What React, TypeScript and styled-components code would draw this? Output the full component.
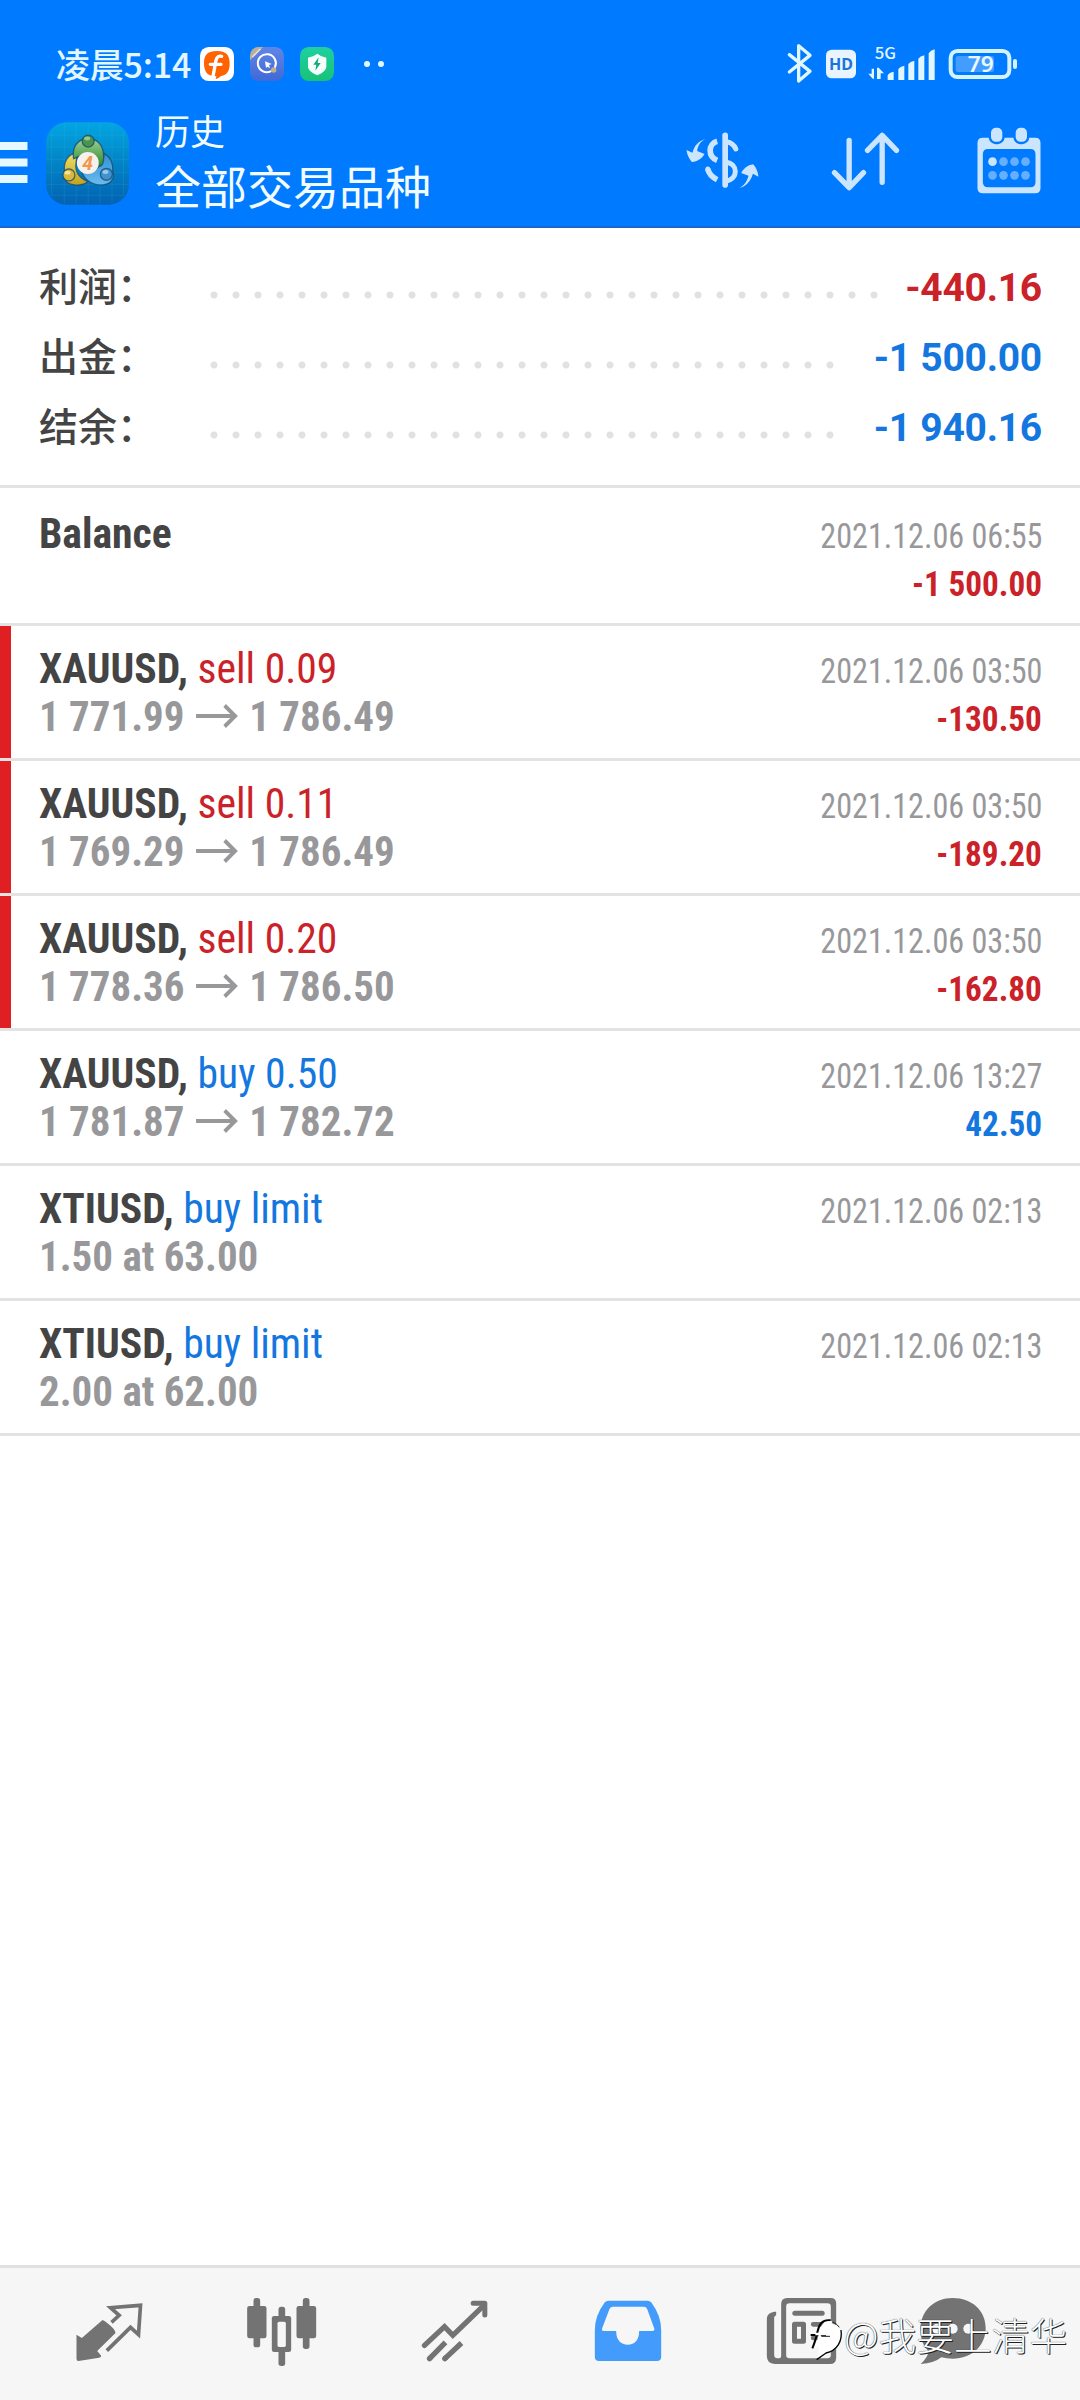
import React from "react";
import styled, { createGlobalStyle } from "styled-components";

const cjk = `"Noto Sans CJK SC", sans-serif`;
const condensed = `"Roboto Condensed", Roboto, "Noto Sans CJK SC", sans-serif`;

const GlobalStyle = createGlobalStyle`
  * { box-sizing: border-box; }
  body { margin: 0; background: #fff; }
  svg { display: block; flex: none; overflow: visible; }
`;

type Tone = "red" | "blue";
const tones: Record<Tone, string> = { red: "#cb2229", blue: "#1477e0" };

const Screen = styled.div`
  position: relative;
  width: 1080px;
  height: 2400px;
  display: flex;
  flex-direction: column;
  background: #fff;
  overflow: hidden;
  font-family: Roboto, ${cjk};
`;

const Header = styled.header`
  height: 228px;
  background: #007aff;
  border-bottom: 2px solid #1a66cf;
`;

const StatusBar = styled.div`
  height: 98px;
  padding: 30px 62px 0 56px;
  display: flex;
  align-items: center;
  justify-content: space-between;
`;

const Notifications = styled.div`
  display: flex;
  align-items: center;
  gap: 16px;
`;

const Clock = styled.span`
  width: 128px;
  font: 500 34px/50px ${cjk};
  letter-spacing: -0.2px;
  color: #e2f6ff;
  white-space: nowrap;
`;

const MoreDots = styled.div`
  margin-left: 14px;
`;

const AppBar = styled.div`
  height: 130px;
  display: flex;
  align-items: center;
`;

const LogoSlot = styled.div`
  margin-left: 18px;
`;

const Titles = styled.div`
  margin: -8px 0 0 26px;
  flex: 1;
  display: flex;
  flex-direction: column;
  color: #f2fcff;
`;

const Caption = styled.span`
  font: 400 35px/50px ${cjk};
`;

const Title = styled.span`
  font: 400 46px/58px ${cjk};
`;

const ToolButton = styled.div`
  width: 143px;
  display: flex;
  justify-content: center;
`;

const Summary = styled.section`
  height: 260px;
  padding: 25px 38px 0 39px;
  border-bottom: 3px solid #e3e3e3;
`;

const SummaryRow = styled.div`
  height: 70px;
  display: flex;
  align-items: center;
`;

const SummaryLabel = styled.span`
  width: 163.5px;
  margin-top: -8px;
  font: 500 39px/62px ${cjk};
  color: #444;
`;

const Leader = styled.span<{ $dots: number }>`
  width: ${(p) => p.$dots * 22}px;
  height: 22px;
  margin-top: 13px;
  background: radial-gradient(circle at center, #e1e1e1 3px, transparent 4px) 0 0 / 22px 22px repeat-x;
`;

const SummaryValue = styled.span<{ $tone: Tone }>`
  margin-left: auto;
  font: 700 39px/70px Roboto, sans-serif;
  letter-spacing: -0.25px;
  color: ${(p) => tones[p.$tone]};
`;

const DealList = styled.main`
  display: flex;
  flex-direction: column;
`;

const Row = styled.article<{ $first?: boolean; $marked?: boolean }>`
  height: ${(p) => (p.$first ? 138 : 135)}px;
  padding: ${(p) => (p.$first ? 20.5 : 17.5)}px 38px 0 39px;
  display: flex;
  justify-content: space-between;
  font-family: ${condensed};
  font-stretch: 75%;
  background:
    linear-gradient(#e01f22, #e01f22) 0 0 / ${(p) => (p.$marked ? 11 : 0)}px 132px no-repeat,
    linear-gradient(#e3e3e3, #e3e3e3) bottom / 100% 3px no-repeat;
`;

const Column = styled.div<{ $end?: boolean }>`
  display: flex;
  flex-direction: column;
  align-items: ${(p) => (p.$end ? "flex-end" : "flex-start")};
`;

const Line = styled.div`
  height: 48px;
  display: flex;
  align-items: center;
  font-size: 43px;
  line-height: 48px;
  font-weight: 700;
  white-space: pre;
  transform: scaleX(0.968);
  transform-origin: left;
`;

const Symbol = styled.span`
  color: #444;
`;

const Action = styled.span<{ $tone: Tone }>`
  font-weight: 400;
  color: ${(p) => tones[p.$tone]};
`;

const Price = styled(Line)`
  color: #98989b;
  gap: 12px;
  transform: scaleX(0.952);
`;

const Stamp = styled.div`
  height: 48px;
  margin-top: 3px;
  font-size: 35.5px;
  line-height: 48px;
  color: #98989b;
  transform: scaleX(0.905);
  transform-origin: right;
`;

const Amount = styled.div<{ $tone: Tone }>`
  height: 48px;
  font-size: 35.5px;
  line-height: 48px;
  font-weight: 700;
  color: ${(p) => tones[p.$tone]};
  transform: scaleX(0.935);
  transform-origin: right;
`;

const TabBar = styled.nav`
  margin-top: auto;
  height: 135px;
  padding-left: 22px;
  display: flex;
  background: #f6f6f6;
  border-top: 3px solid #e1e1e1;
`;

const Tab = styled.div<{ $w?: number }>`
  width: ${(p) => p.$w ?? 173}px;
  padding-top: 24px;
  display: flex;
  justify-content: center;
`;

const Watermark = styled.div`
  position: absolute;
  left: 808px;
  top: 2309px;
  display: flex;
  align-items: center;
  font: 300 37.8px/50px ${cjk};
  color: #fff;
  white-space: nowrap;
  text-shadow: 1px 1px 0 #222, 0 0 1px #000;
`;

const FIcon = () => (
  <svg width="34" height="34" viewBox="600 48 102 102">
    <rect x="600" y="48" width="102" height="102" rx="26" fill="#fff" />
    <path d="M651 60c27 0 38 12 38 37s-9 35-25 38c-5 1-8 8-17 9l2-8c-26 0-37-12-37-39s12-37 39-37z" fill="#ff6200" />
    <path d="M665 76c-14-3-17 8-19 22l-8 44M631 100h32" fill="none" stroke="#fff" strokeWidth="10" strokeLinecap="round" />
  </svg>
);

const QIcon = () => (
  <svg width="34" height="34" viewBox="750 48 102 102">
    <defs>
      <clipPath id="qclip"><rect x="750" y="48" width="102" height="102" rx="26" /></clipPath>
      <linearGradient id="qbg" x1="0" y1="0" x2="0" y2="1"><stop offset="0" stopColor="#5f86e6" /><stop offset="1" stopColor="#4169d8" /></linearGradient>
    </defs>
    <g clipPath="url(#qclip)">
      <rect x="750" y="48" width="102" height="102" fill="url(#qbg)" />
      <path d="M750 48h40l-40 40z" fill="#b9ad9c" />
      <path d="M757 78l24-24" stroke="#e8dfd0" strokeWidth="5" />
    </g>
    <path d="M812 121a27 27 0 1 1 13-13" fill="none" stroke="#fff" strokeWidth="6" strokeLinecap="round" />
    <path d="M795 91l20 8-8 3 3 10-8-5-4 4z" fill="#fff" />
    <circle cx="821" cy="117" r="8" fill="#c3b184" />
  </svg>
);

const ShieldIcon = () => (
  <svg width="34" height="34" viewBox="900 48 102 102">
    <defs><linearGradient id="sbg" x1="0" y1="0" x2="0" y2="1"><stop offset="0" stopColor="#1fd0a0" /><stop offset="1" stopColor="#17c277" /></linearGradient></defs>
    <rect x="900" y="48" width="102" height="102" rx="26" fill="url(#sbg)" />
    <path d="M952 68q12 10 27 12v26c0 14-14 21-27 27-13-6-28-13-28-27V80q16-2 28-12z" fill="#f4fffc" />
    <path d="M956 79l-16 22h9l-3 18 16-23h-9z" fill="#16a77a" />
  </svg>
);

const Dots = () => (
  <svg width="20" height="8" viewBox="0 0 20 8"><circle cx="3" cy="4" r="3" fill="#e2f6ff" /><circle cx="17" cy="4" r="3" fill="#e2f6ff" /></svg>
);

const SystemIcons = () => (
  <svg width="231" height="42" viewBox="351 36 693 126">
    <path d="M358 71l62 50-34 29V44l34 29-62 50" fill="none" stroke="#e2f6ff" strokeWidth="10" strokeLinejoin="round" strokeLinecap="round" />
    <rect x="468" y="56" width="90" height="86" rx="17" fill="#e9f4ff" />
    <text x="513" y="117" textAnchor="middle" fontFamily="Noto Sans, sans-serif" fontWeight="700" fontSize="49" textLength="72" lengthAdjust="spacingAndGlyphs" fill="#1873dd">HD</text>
    <text x="646" y="84" textAnchor="middle" fontFamily="Noto Sans CJK SC, sans-serif" fontWeight="500" fontSize="47" textLength="64" lengthAdjust="spacingAndGlyphs" fill="#e2f6ff">5G</text>
    <path d="M612 113v30h-4l-13-15h10v-15zM621 144v-34h5l16 17h-10v17z" fill="#e2f6ff" />
    <path d="M653 147v-14q5-9 18-11v25zM685 147v-33q5-8 18-10v43zM715 147V99q5-8 18-10v58zM745 147V83q5-8 18-10v74zM776 147V67q5-9 18-12v92z" fill="#e2f6ff" />
    <rect x="842" y="60" width="176" height="78" rx="20" fill="none" stroke="#d4f3ff" strokeWidth="12" />
    <rect x="857" y="75" width="115" height="48" rx="7" fill="#439dff" />
    <text x="932" y="124" textAnchor="middle" fontFamily="Noto Sans, sans-serif" fontWeight="600" fontSize="67" textLength="78" lengthAdjust="spacingAndGlyphs" fill="#e9f8ff">79</text>
    <rect x="1029" y="84" width="12" height="30" rx="6" fill="#d4f3ff" />
  </svg>
);

const MenuIcon = () => (
  <svg width="28" height="42" viewBox="0 0 28 42" fill="#e6f9ff"><path d="M0 0h27.5v8H0zM0 16.500h27.500v8H0zM0 33h27.500v8H0z" /></svg>
);

const AppLogo = () => (
  <svg width="83" height="83" viewBox="138 272 250 249">
    <defs>
      <linearGradient id="lbg" x1="0" y1="0" x2="0" y2="1"><stop offset="0" stopColor="#02a6e2" /><stop offset=".5" stopColor="#0283c5" /><stop offset="1" stopColor="#0262b2" /></linearGradient>
      <linearGradient id="lg" x1="0" y1="0" x2="0" y2="1"><stop offset="0" stopColor="#a5d39a" /><stop offset="1" stopColor="#2c8a2c" /></linearGradient>
      <linearGradient id="ly" x1="0" y1="0" x2="0" y2="1"><stop offset="0" stopColor="#eee06a" /><stop offset="1" stopColor="#c2a21c" /></linearGradient>
      <linearGradient id="lb" x1="0" y1="0" x2="0" y2="1"><stop offset="0" stopColor="#2f8fd2" /><stop offset="1" stopColor="#6abcf0" /></linearGradient>
    </defs>
    <rect x="138" y="272" width="250" height="249" rx="62" fill="url(#lbg)" />
    <path d="M155 300v190M193 273v247M229 273v247M265 273v247M301 273v247M337 273v247M371 300v190M150 311h226M138 347h250M138 385h250M138 423h250M138 459h250M150 492h226" stroke="#6fd0f0" strokeOpacity=".13" strokeWidth="3" />
    <g stroke="#17496b" strokeOpacity=".75" strokeWidth="4">
      <path d="M313 366c18 10 28 28 26 54 8 22-8 40-30 41-32 2-56-16-63-40 30 2 62-4 67-55z" fill="url(#lb)" />
      <path d="M232 365c-28 2-42 26-38 54-10 22 6 40 30 42 18 2 32-2 40-10-24-10-38-28-36-52z" fill="url(#ly)" />
      <path d="M221 382c-4-30 8-50 28-58 8-8 24-8 32 0 22 8 34 32 30 64-2 14-8 18-13 16-4-20-16-35-33-35s-28 6-44 13z" fill="url(#lg)" />
      <circle cx="265" cy="329" r="18" fill="#4a944c" />
      <circle cx="207" cy="431" r="18" fill="#d9b93a" />
      <circle cx="320" cy="429" r="18" fill="#3f94d0" />
    </g>
    <ellipse cx="262" cy="321" rx="9" ry="6" fill="#c8e6c4" opacity=".6" />
    <ellipse cx="203" cy="424" rx="9" ry="6" fill="#fff6c0" opacity=".7" />
    <ellipse cx="317" cy="422" rx="9" ry="6" fill="#d0ecff" opacity=".6" />
    <circle cx="264" cy="395" r="33" fill="#f6f1ec" />
    <text x="263" y="415" textAnchor="middle" fontFamily="Roboto, sans-serif" fontWeight="700" fontSize="58" fontStyle="italic" fill="#f3964e">4</text>
  </svg>
);

const CurrencyIcon = () => (
  <svg width="80" height="80" viewBox="37.500 279 240 240" fill="#cce5ff">
    <path d="M106 327c-16 6-24 20-26 36l22 9c-8 14-21 23-38 24-8-9-14-20-16-36l18 8c5-20 18-36 40-41z" />
    <path d="M206 474c16-8 24-21 28-37l-22-8c8-14 18-23 36-26 9 9 14 22 16 37l-17-9c-6 22-20 38-41 43z" />
    <path d="M140 334c-28 8-28 46 0 57M112 417q4 20 28 32" fill="none" stroke="#cce5ff" strokeWidth="17" />
    <path d="M112 419v-2" stroke="#cce5ff" strokeWidth="15" strokeLinecap="round" />
    <path d="M164 316v149" stroke="#cce5ff" strokeWidth="17" strokeLinecap="round" />
    <path d="M166 335q22 2 30 22" fill="none" stroke="#cce5ff" strokeWidth="15" strokeLinecap="round" />
    <path d="M166 397c38 3 38 52 0 56" fill="none" stroke="#cce5ff" strokeWidth="15" />
  </svg>
);

const SortIcon = () => (
  <svg width="80" height="80" viewBox="466.500 279 240 240" fill="none" stroke="#cce5ff" strokeWidth="16" strokeLinecap="round" strokeLinejoin="round">
    <path d="M536 331v140M492 428l44 45 43-45M635 457V317M591 361l44-45 43 45" />
  </svg>
);

const CalendarIcon = () => (
  <svg width="80" height="80" viewBox="895.500 279 240 240">
    <path fillRule="evenodd" d="M937 323h157q16 0 16 16v136q0 15-16 15H937q-16 0-16-15V339q0-16 16-16zM953 357q-16 0-16 16v84q0 15 16 15h126q16 0 16-15v-84q0-16-16-16z" fill="#cce5ff" />
    <g fill="#cce5ff" stroke="#007aff" strokeWidth="7">
      <rect x="958" y="290" width="41" height="49" rx="18" />
      <rect x="1032" y="290" width="41" height="49" rx="18" />
    </g>
    {[966, 999, 1032, 1065].map((x, i) => (
      <g key={x} fill="#66afff">
        <circle cx={x} cy="395" r="13" fill={i === 0 ? "#cce5ff" : "#66afff"} />
        <circle cx={x} cy="436" r="13" />
      </g>
    ))}
  </svg>
);

const Arrow = () => (
  <svg width="44" height="24" viewBox="0 0 44 24" fill="none" stroke="#98989b" strokeWidth="4"><path d="M0 12h41M30 1.500l11 10.500-11 10.500" /></svg>
);

const tabIcons = [
  <svg key="quotes" width="80" height="80" viewBox="205.500 126 240 240" fill="#737373">
    <path d="M306 210q8 3 14 9 24 18 25 30l-55 54 12 14q0 5-6 6l-62 10q-6 0-6-7v-72l16 10z" />
    <path d="M333 217l23-21-26-23 90-7-6 88-24-22-71 70" fill="none" stroke="#737373" strokeWidth="11" />
  </svg>,
  <svg key="chart" width="80" height="80" viewBox="724.500 126 240 240" fill="#737373">
    <rect x="759" y="144" width="20" height="148" rx="8" /><rect x="740" y="168" width="58" height="97" rx="7" />
    <rect x="907" y="144" width="20" height="153" rx="8" /><rect x="888" y="168" width="59" height="97" rx="7" />
    <rect x="834" y="170" width="20" height="178" rx="8" /><rect x="814" y="198" width="58" height="108" rx="7" />
    <rect x="831" y="215" width="25" height="76" rx="5" fill="#f6f6f6" />
  </svg>,
  <svg key="trade" width="80" height="80" viewBox="163.500 126 240 240" fill="none" stroke="#737373" strokeWidth="16" strokeLinejoin="round">
    <path d="M192 286l60-56 25 26 90-87" strokeLinecap="round" strokeLinejoin="miter" />
    <path d="M338 160h35v35" strokeLinecap="round" strokeWidth="15" />
    <path d="M255 277l-48 49M303 279l-50 47" /><path d="M208 325l-1 1M254 325l-1 1" strokeLinecap="round" />
  </svg>,
  <svg key="history" width="80" height="80" viewBox="682.500 126 240 240">
    <path fillRule="evenodd" d="M744 152h117q7 0 11 5 30 40 30 83v80q0 13-13 13H716q-13 0-13-13v-80q0-43 30-83 4-5 11-5zM757 170q-7 0-10 7l-22 58q-3 8 5 8h37c0 27 14 41 35 41s34-14 34-41h39q9 0 6-8l-21-58q-3-7-10-7z" fill="#439bfb" />
  </svg>,
  <svg key="news" width="80" height="80" viewBox="121.500 126 240 240" fill="none" stroke="#737373">
    <path d="M167 185c-15 0-28 6-28 23v110q0 23 24 24h166q17 0 18-18V160q0-16-17-16H200q-18 0-18 18v154q0 9-6 9h-6q-8 0-9-9V202q2-5 6-6z" fill="#737373" stroke="none" />
    <rect x="197" y="160" width="134" height="165" rx="10" fill="#f6f6f6" stroke="none" />
    <path d="M223 190h82" strokeWidth="15" strokeLinecap="round" />
    <rect x="222" y="223" width="27" height="51" strokeWidth="15" strokeLinejoin="round" />
    <path d="M278 223h28M278 264h28" strokeWidth="14" strokeLinecap="round" />
  </svg>,
  <svg key="chat" width="80" height="80" viewBox="580 126 240 240">
    <path d="M699 144c58 0 99 38 99 90s-40 92-99 92q-18 0-34-4-22 18-62 20 22-20 24-38-25-22-25-68c2-54 41-92 97-92z" fill="#737373" />
    <g fill="#f6f6f6"><circle cx="652" cy="236" r="15" /><circle cx="699" cy="236" r="15" /><circle cx="746" cy="236" r="15" /></g>
  </svg>,
];

const WatermarkLogo = () => (
  <svg width="36" height="50" viewBox="264 187 108 150">
    <path d="M318 226c30 2 48 20 45 44-3 30-22 46-44 49l-25 17 2-18-2-30 12-40z" fill="#fff" />
    <path d="M363 250c5 34-12 62-45 69l-28 20" fill="none" stroke="#000" strokeWidth="4" />
    <path d="M332 221c-28-3-34 14-39 32-4 18-8 34-16 52M272 265h46" fill="none" stroke="#000" strokeWidth="6" />
    <path d="M336 227c-24-3-30 12-34 28-4 18-8 30-14 46M286 262h36" fill="none" stroke="#fff" strokeWidth="7" />
    <path d="M304 269h26M338 226q14 6 20 16" stroke="#222" strokeWidth="3" fill="none" />
  </svg>
);

const summary: { label: string; value: string; dots: number; tone: Tone }[] = [
  { label: "利润：", value: "-440.16", dots: 31, tone: "red" },
  { label: "出金：", value: "-1 500.00", dots: 29, tone: "blue" },
  { label: "结余：", value: "-1 940.16", dots: 29, tone: "blue" },
];

interface Deal {
  symbol: string;
  action?: string;
  side?: Tone;
  from?: string;
  to?: string;
  time: string;
  amount?: string;
  tone?: Tone;
  loss?: boolean;
}

const deals: Deal[] = [
  { symbol: "Balance", time: "2021.12.06 06:55", amount: "-1 500.00", tone: "red" },
  { symbol: "XAUUSD,", action: "sell 0.09", side: "red", from: "1 771.99", to: "1 786.49", time: "2021.12.06 03:50", amount: "-130.50", tone: "red", loss: true },
  { symbol: "XAUUSD,", action: "sell 0.11", side: "red", from: "1 769.29", to: "1 786.49", time: "2021.12.06 03:50", amount: "-189.20", tone: "red", loss: true },
  { symbol: "XAUUSD,", action: "sell 0.20", side: "red", from: "1 778.36", to: "1 786.50", time: "2021.12.06 03:50", amount: "-162.80", tone: "red", loss: true },
  { symbol: "XAUUSD,", action: "buy 0.50", side: "blue", from: "1 781.87", to: "1 782.72", time: "2021.12.06 13:27", amount: "42.50", tone: "blue" },
  { symbol: "XTIUSD,", action: "buy limit", side: "blue", from: "1.50 at 63.00", time: "2021.12.06 02:13" },
  { symbol: "XTIUSD,", action: "buy limit", side: "blue", from: "2.00 at 62.00", time: "2021.12.06 02:13" },
];

export default function App() {
  return (
    <Screen>
      <GlobalStyle />
      <Header>
        <StatusBar>
          <Notifications>
            <Clock>凌晨5:14</Clock>
            <FIcon />
            <QIcon />
            <ShieldIcon />
            <MoreDots><Dots /></MoreDots>
          </Notifications>
          <SystemIcons />
        </StatusBar>
        <AppBar>
          <MenuIcon />
          <LogoSlot><AppLogo /></LogoSlot>
          <Titles>
            <Caption>历史</Caption>
            <Title>全部交易品种</Title>
          </Titles>
          <ToolButton><CurrencyIcon /></ToolButton>
          <ToolButton><SortIcon /></ToolButton>
          <ToolButton><CalendarIcon /></ToolButton>
        </AppBar>
      </Header>
      <Summary>
        {summary.map((s) => (
          <SummaryRow key={s.label}>
            <SummaryLabel>{s.label}</SummaryLabel>
            <Leader $dots={s.dots} />
            <SummaryValue $tone={s.tone}>{s.value}</SummaryValue>
          </SummaryRow>
        ))}
      </Summary>
      <DealList>
        {deals.map((d, i) => (
          <Row key={i} $first={i === 0} $marked={d.loss}>
            <Column>
              <Line>
                <Symbol>{d.symbol}</Symbol>
                {d.action && <Action $tone={d.side!}> {d.action}</Action>}
              </Line>
              {d.from && (
                <Price>
                  <span>{d.from}</span>
                  {d.to && <Arrow />}
                  {d.to && <span>{d.to}</span>}
                </Price>
              )}
            </Column>
            <Column $end>
              <Stamp>{d.time}</Stamp>
              {d.amount && <Amount $tone={d.tone!}>{d.amount}</Amount>}
            </Column>
          </Row>
        ))}
      </DealList>
      <TabBar>
        {tabIcons.map((icon, i) => (
          <Tab key={i} $w={i === 5 ? 132 : undefined}>{icon}</Tab>
        ))}
      </TabBar>
      <Watermark>
        <WatermarkLogo />
        @我要上清华
      </Watermark>
    </Screen>
  );
}
